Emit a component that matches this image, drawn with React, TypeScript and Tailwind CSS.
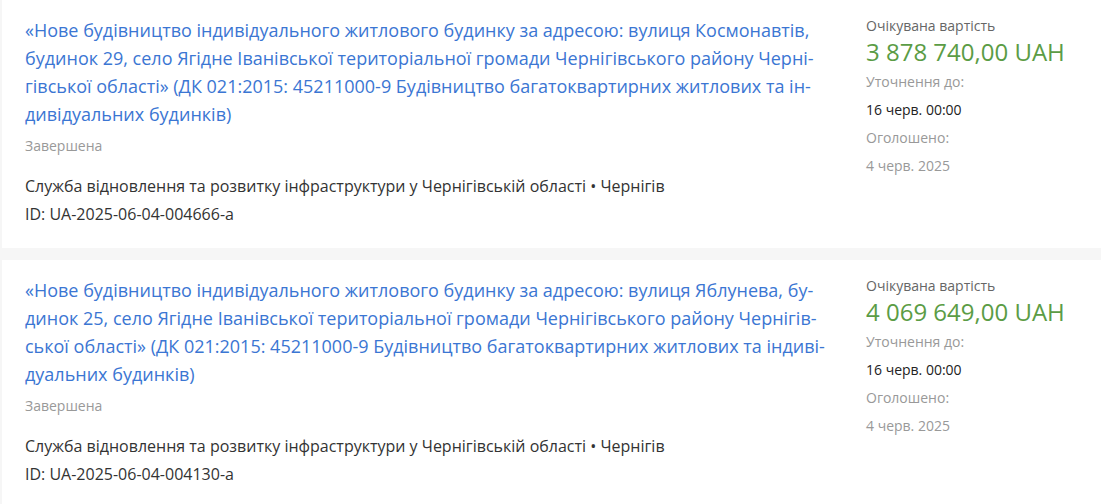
const tenders = [
  {
    title: [
      '«Нове будівництво індивідуального житлового будинку за адресою: вулиця Космонавтів,',
      'будинок 29, село Ягідне Іванівської територіальної громади Чернігівського району Черні-',
      'гівської області» (ДК 021:2015: 45211000-9 Будівництво багатоквартирних житлових та ін-',
      'дивідуальних будинків)',
    ],
    status: 'Завершена',
    org: 'Служба відновлення та розвитку інфраструктури у Чернігівській області • Чернігів',
    id: 'UA-2025-06-04-004666-a',
    amount: '3 878 740,00 UAH',
    enquiry: '16 черв. 00:00',
    published: '4 черв. 2025',
  },
  {
    title: [
      '«Нове будівництво індивідуального житлового будинку за адресою: вулиця Яблунева, бу-',
      'динок 25, село Ягідне Іванівської територіальної громади Чернігівського району Чернігів-',
      'ської області» (ДК 021:2015: 45211000-9 Будівництво багатоквартирних житлових та індиві-',
      'дуальних будинків)',
    ],
    status: 'Завершена',
    org: 'Служба відновлення та розвитку інфраструктури у Чернігівській області • Чернігів',
    id: 'UA-2025-06-04-004130-a',
    amount: '4 069 649,00 UAH',
    enquiry: '16 черв. 00:00',
    published: '4 черв. 2025',
  },
];

export default function App() {
  return (
    <div
      className="min-h-screen bg-[#f6f6f6] pl-[2px] flex flex-col gap-[12px] overflow-hidden"
      style={{ fontFamily: '"Open Sans", "Noto Sans", sans-serif' }}
    >
      {tenders.map((t) => (
        <div key={t.id} className="bg-white flex pl-[23px] pt-[16px] pb-[20px]">
          {/* Main info */}
          <div className="w-[841px] flex-none">
            <a href="#" className="block text-[18px] leading-[28px] text-[#3b76d3]">
              {t.title.map((line, i) => (
                <span key={i}>
                  {line}
                  {i < t.title.length - 1 && <br />}
                </span>
              ))}
            </a>
            <div className="mt-[8px] text-[14px] leading-[20px] text-[#999]">{t.status}</div>
            <div className="mt-[16px] text-[16px] leading-[28px] text-[#333]">
              <div>{t.org}</div>
              <div>ID: {t.id}</div>
            </div>
          </div>

          {/* Side info */}
          <div className="flex-1 text-[14px]">
            <div className="leading-[20px] text-[#666]">Очікувана вартість</div>
            <div className="text-[24px] leading-[32px] text-[#5b9c45]">{t.amount}</div>
            <div className="leading-[28px] text-[#999]">Уточнення до:</div>
            <div className="leading-[28px] text-[#222]">{t.enquiry}</div>
            <div className="leading-[28px] text-[#999]">Оголошено:</div>
            <div className="leading-[28px] text-[#999]">{t.published}</div>
          </div>
        </div>
      ))}
    </div>
  );
}
